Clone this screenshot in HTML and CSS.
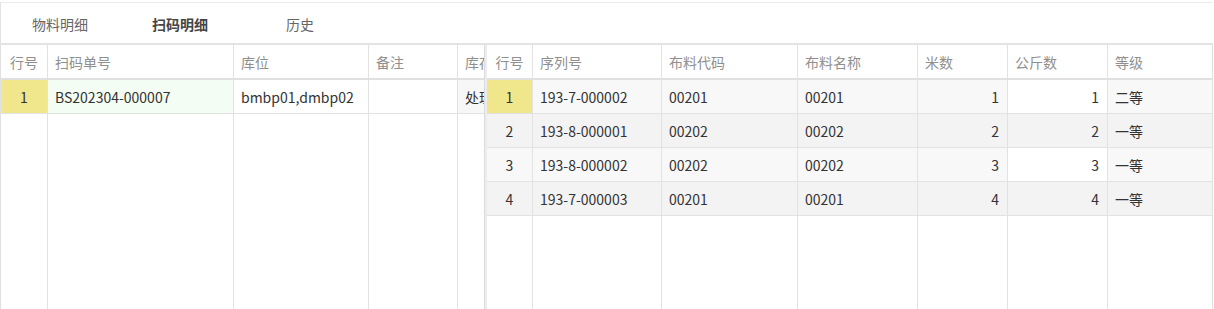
FILE: index.html
```html
<!DOCTYPE html>
<html lang="zh-CN">
<head>
<meta charset="utf-8">
<title>扫码明细</title>
<link rel="stylesheet" href="styles.css">
</head>
<body>
<div class="page">
  <div class="tabs">
    <div class="tab">物料明细</div>
    <div class="tab active">扫码明细</div>
    <div class="tab">历史</div>
  </div>
  <div class="panes">
    <div class="pane left">
      <div class="row head">
        <div class="c num">行号</div>
        <div class="c">扫码单号</div>
        <div class="c">库位</div>
        <div class="c">备注</div>
        <div class="c">库存状态</div>
      </div>
      <div class="row">
        <div class="c num cur">1</div>
        <div class="c green">BS202304-000007</div>
        <div class="c white">bmbp01,dmbp02</div>
        <div class="c white"></div>
        <div class="c grey">处理中</div>
      </div>
      <div class="row fill">
        <div class="c"></div><div class="c"></div><div class="c"></div><div class="c"></div><div class="c"></div>
      </div>
    </div>
    <div class="split"></div>
    <div class="pane right">
      <div class="row head">
        <div class="c num">行号</div>
        <div class="c">序列号</div>
        <div class="c">布料代码</div>
        <div class="c">布料名称</div>
        <div class="c">米数</div>
        <div class="c">公斤数</div>
        <div class="c">等级</div>
      </div>
      <div class="row odd">
        <div class="c num cur">1</div>
        <div class="c">193-7-000002</div>
        <div class="c">00201</div>
        <div class="c">00201</div>
        <div class="c r">1</div>
        <div class="c r edit">1</div>
        <div class="c">二等</div>
      </div>
      <div class="row even">
        <div class="c num">2</div>
        <div class="c">193-8-000001</div>
        <div class="c">00202</div>
        <div class="c">00202</div>
        <div class="c r">2</div>
        <div class="c r">2</div>
        <div class="c">一等</div>
      </div>
      <div class="row odd">
        <div class="c num">3</div>
        <div class="c">193-8-000002</div>
        <div class="c">00202</div>
        <div class="c">00202</div>
        <div class="c r">3</div>
        <div class="c r edit">3</div>
        <div class="c">一等</div>
      </div>
      <div class="row even">
        <div class="c num">4</div>
        <div class="c">193-7-000003</div>
        <div class="c">00201</div>
        <div class="c">00201</div>
        <div class="c r">4</div>
        <div class="c r">4</div>
        <div class="c">一等</div>
      </div>
      <div class="row fill">
        <div class="c"></div><div class="c"></div><div class="c"></div><div class="c"></div><div class="c"></div><div class="c"></div><div class="c"></div>
      </div>
    </div>
  </div>
</div>
</body>
</html>
```

FILE: styles.css
```css
* { box-sizing: border-box; }
html, body { margin: 0; padding: 0; background: #fff; }
body {
  font-family: "Noto Sans CJK SC", "Noto Sans", sans-serif;
  font-size: 14px;
  color: #333;
  width: 1214px;
  height: 309px;
  overflow: hidden;
}
.page {
  width: 1213px;
  height: 309px;
  margin-top: 2px;
  border-top: 1px solid #ebebeb;
  border-left: 1px solid #e3e3e3;
  display: flex;
  flex-direction: column;
}
.tabs {
  height: 40px;
  display: flex;
  align-items: center;
  margin-left: -1px;
  padding-top: 2px;
}
.tab {
  width: 120px;
  text-align: center;
  color: #666;
  line-height: 20px;
}
.tab.active { font-weight: bold; color: #444; }
.panes {
  flex: 1;
  display: flex;
  margin-left: -1px;
  border-top: 2px solid #e3e3e3;
  min-height: 0;
}
.pane {
  display: flex;
  flex-direction: column;
  overflow: hidden;
}
.pane.left {
  width: 485px;
  border-left: 1px solid #e0e0e0;
  border-right: 1px solid #dcdcdc;
}
.split {
  width: 2px;
  background: #ececec;
}
.pane.right {
  width: 726px;
  border-right: 1px solid #e0e0e0;
}
.row {
  display: grid;
  height: 34px;
  border-bottom: 1px solid #e2e2e2;
  flex: none;
}
.left .row { grid-template-columns: 47px 186px 135px 89px 120px; }
.right .row { grid-template-columns: 46px 129px 136px 120px 90px 100px 105px; }
.row.head { height: 35px; border-bottom: 2px solid #e0e0e0; color: #8f8f8f; }
.row.fill { flex: 1; border-bottom: none; }
.c {
  border-right: 1px solid #e2e2e2;
  padding: 0 7px;
  display: flex;
  align-items: center;
  white-space: nowrap;
  overflow: hidden;
}
.c.num { justify-content: center; padding: 0; }
.c.r { justify-content: flex-end; padding-right: 8px; }
.c.cur { background: #f0e68c; }
.c.green { background: #f3fdf3; }
.c.white { background: #fff; }
.c.grey { background: #f7f7f7; }
.row.odd { background: #f8f8f8; }
.row.even { background: #f3f3f3; }
.row.odd .c.edit { background: #fff; }
.row.fill .c { background: #fff; }
```
